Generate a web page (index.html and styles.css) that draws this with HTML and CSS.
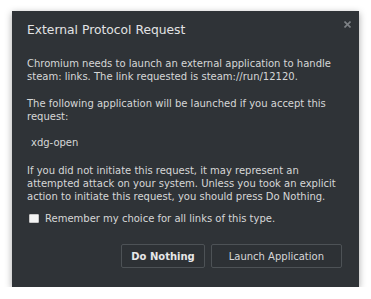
FILE: index.html
```html
<!DOCTYPE html>
<html lang="en">
<head>
  <meta charset="UTF-8">
  <meta name="viewport" content="width=device-width, initial-scale=1.0">
  <title>External Protocol Request</title>
  <link rel="stylesheet" href="styles.css">
</head>
<body>
  <div class="dialog">
    <h2 class="dialog-title">External Protocol Request</h2>
    <button type="button" class="close-button" aria-label="Close">
      <svg width="7" height="7" viewBox="0 0 7 7">
        <path d="M0.5 0.5 L6.5 6.5 M6.5 0.5 L0.5 6.5" stroke="#7d8185" stroke-width="1.6"/>
      </svg>
    </button>
    <p class="message">Chromium needs to launch an external application to handle steam: links. The link requested is steam://run/12120.</p>
    <p class="message">The following application will be launched if you accept this request:</p>
    <p class="message app-name">xdg-open</p>
    <p class="message warning">If you did not initiate this request, it may represent an attempted attack on your system. Unless you took an explicit action to initiate this request, you should press Do Nothing.</p>
    <label class="remember">
      <input type="checkbox" id="remember">
      <span>Remember my choice for all links of this type.</span>
    </label>
    <div class="actions">
      <button type="button" class="btn btn-default">Do Nothing</button>
      <button type="button" class="btn btn-launch">Launch Application</button>
    </div>
  </div>
</body>
</html>
```

FILE: styles.css
```css
body {
  margin: 0;
  background: #ffffff;
  font-family: "DejaVu Sans", sans-serif;
}
.dialog {
  position: relative;
  width: 347px;
  box-sizing: border-box;
  margin: 11px 0 0 12px;
  padding: 11px 17px 19px 15px;
  background: #2f3337;
  color: #d6d7d8;
  box-shadow: 0 2px 7px rgba(0, 0, 0, 0.35);
}
.dialog-title {
  margin: 0;
  font-size: 12.3px;
  font-weight: normal;
  line-height: 16px;
  color: #e2e3e4;
}
.close-button {
  position: absolute;
  top: 10px;
  left: 332px;
  padding: 0;
  border: none;
  background: none;
  line-height: 0;
  cursor: pointer;
}
.message {
  margin: 14px 0 0;
  font-size: 10px;
  line-height: 13px;
}
.dialog-title + .close-button + .message {
  margin-top: 19px;
}
.app-name {
  margin-top: 13px;
  padding-left: 4px;
}
.warning {
  margin-top: 15px;
}
.remember {
  display: flex;
  align-items: center;
  gap: 6px;
  margin-top: 9px;
  font-size: 10px;
  line-height: 13px;
}
.remember input {
  appearance: none;
  width: 10px;
  height: 9px;
  margin: 0 0 0 2px;
  background: #f4f4f4;
  border: 1px solid #c8c8c8;
  border-radius: 1px;
}
.actions {
  display: flex;
  justify-content: flex-end;
  gap: 6px;
  margin-top: 19px;
}
.btn {
  height: 24px;
  padding: 0 9px;
  font-family: "DejaVu Sans", sans-serif;
  font-size: 10px;
  color: #d6d7d8;
  background: #2d3135;
  border: 1px solid #4d5256;
  border-radius: 2px;
  cursor: pointer;
}
.btn-default {
  font-weight: bold;
  color: #e6e7e8;
}
.btn-launch {
  padding: 0 17px;
}
```
